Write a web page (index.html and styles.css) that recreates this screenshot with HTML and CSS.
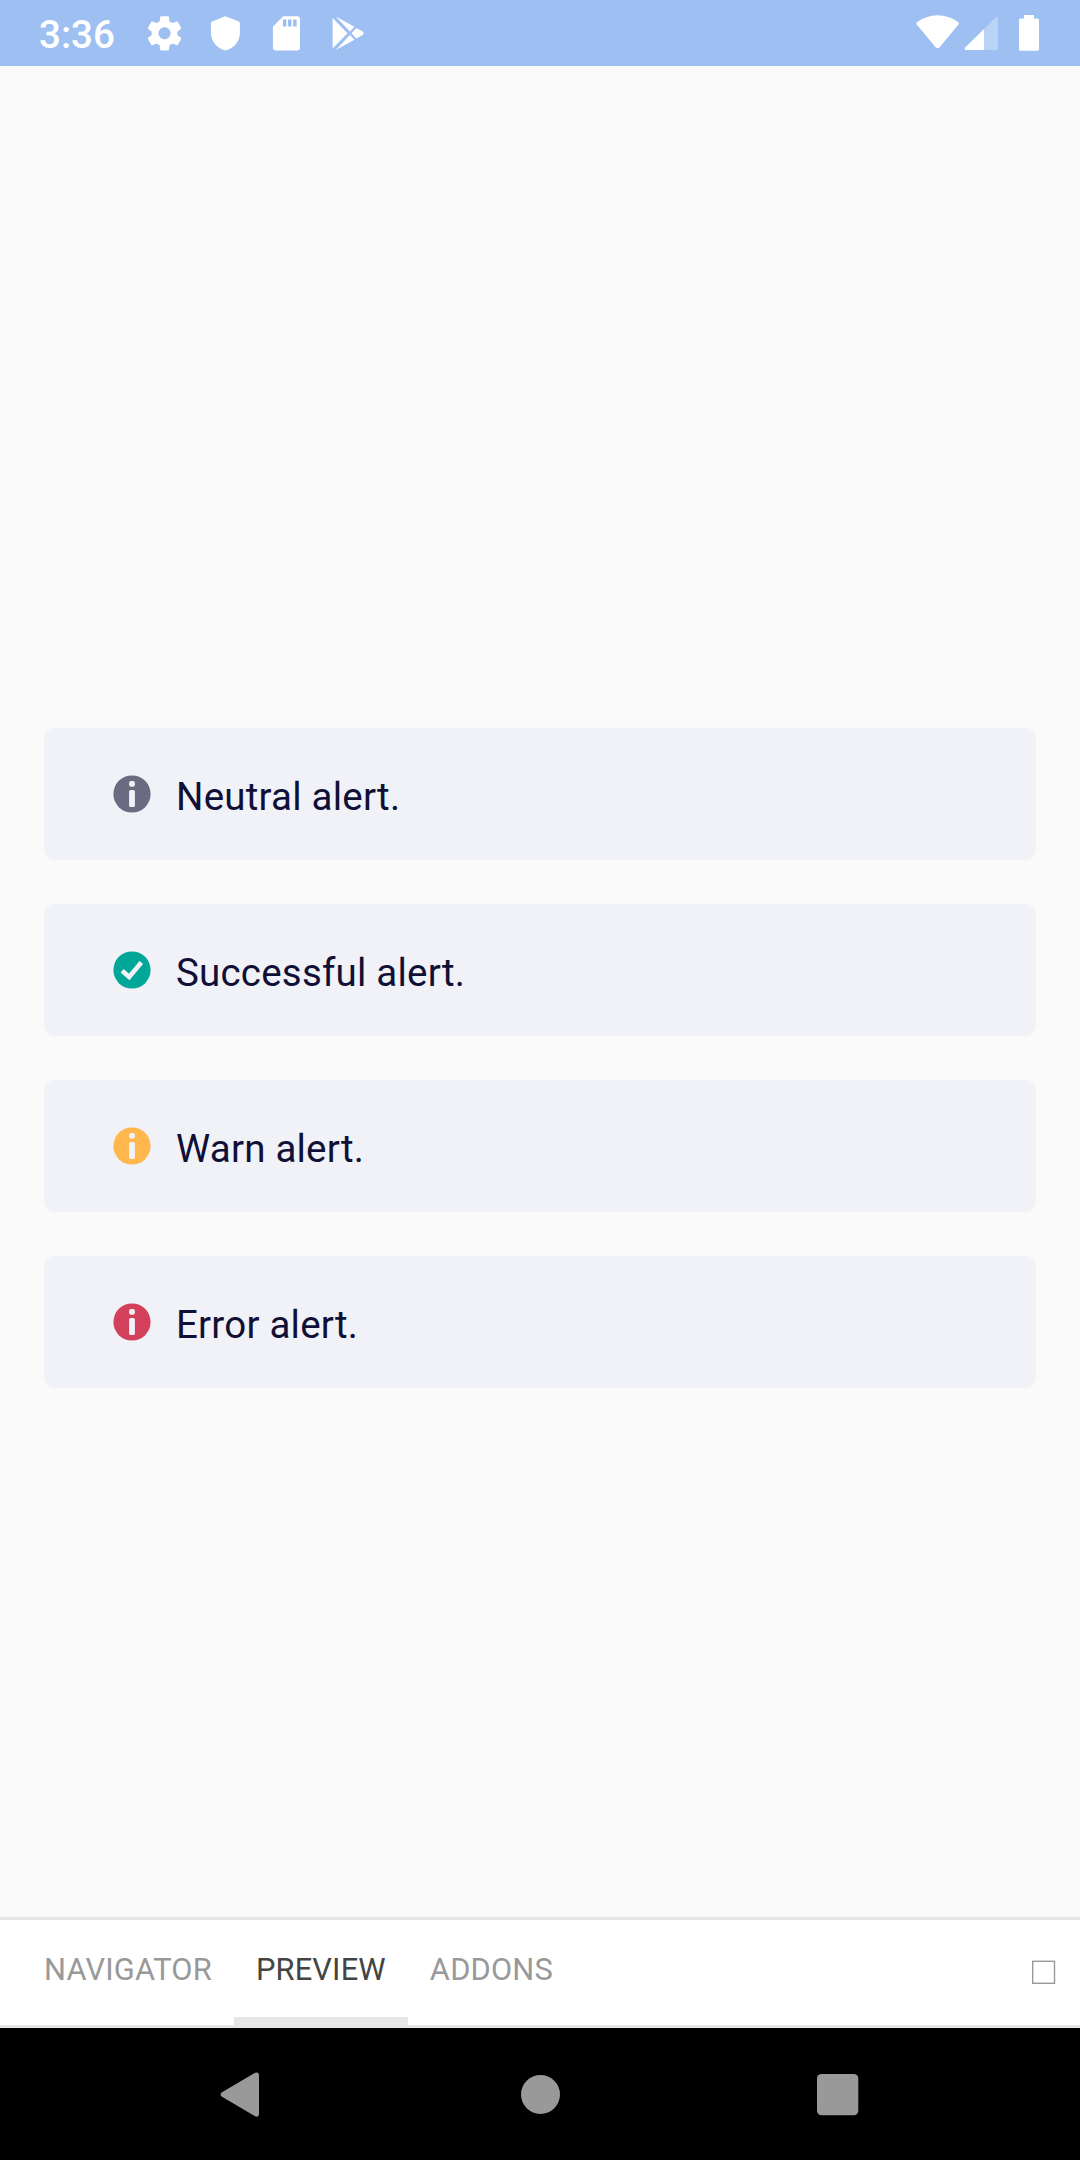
FILE: index.html
```html
<!DOCTYPE html>
<html lang="en">
<head>
<meta charset="utf-8">
<title>Alerts</title>
<link rel="stylesheet" href="styles.css">
</head>
<body>
<div class="screen">
  <header class="status">
    <span class="clock">3:36</span>
    <svg class="notifications" width="230" height="66" viewBox="140 0 230 66">
      <path transform="translate(143.9 12.7) scale(1.72)" d="M19.43 12.98c.04-.32.07-.64.07-.98s-.03-.66-.07-.98l2.11-1.65c.19-.15.24-.42.12-.64l-2-3.46c-.12-.22-.39-.3-.61-.22l-2.49 1c-.52-.4-1.08-.73-1.69-.98l-.38-2.65C14.46 2.18 14.25 2 14 2h-4c-.25 0-.46.18-.49.42l-.38 2.65c-.61.25-1.17.59-1.69.98l-2.49-1c-.23-.09-.49 0-.61.22l-2 3.46c-.13.22-.07.49.12.64l2.11 1.65c-.04.32-.07.65-.07.98s.03.66.07.98l-2.11 1.65c-.19.15-.24.42-.12.64l2 3.46c.12.22.39.3.61.22l2.49-1c.52.4 1.08.73 1.69.98l.38 2.65c.03.24.24.42.49.42h4c.25 0 .46-.18.49-.42l.38-2.65c.61-.25 1.17-.59 1.69-.98l2.49 1c.23.09.49 0 .61-.22l2-3.46c.12-.22.07-.49-.12-.64l-2.11-1.65zM12 15.5c-1.93 0-3.5-1.57-3.5-3.5s1.57-3.5 3.5-3.5 3.5 1.57 3.5 3.5-1.57 3.5-3.5 3.5z"/>
      <path d="M225.4 16.2l13.4 5.2q1.1.5 1.1 1.7v9.3c0 8.6-5.8 15.800-14.500 18.200c-8.700-2.400-14.500-9.600-14.500-18.200v-9.300q0-1.200 1.100-1.700z"/>
      <path fill-rule="evenodd" d="M283.200 16.200h13.800q3 0 3 3v28.300q0 3-3 3h-21.100q-3 0-3-3v-20.800zM282.900 19.500v7h3.500v-7zM288 19.500v7h3.500v-7zM293.100 19.500v7h3.500v-7z"/>
      <path d="M332.600 18.100l14.900 15.200-14.900 15.200zM335.800 16.500l18.700 10.300-4.600 4.800zM349.900 35.100l4.600 4.700-18.700 10.300zM356.400 28.100l6.300 3.500q2 1.700 0 3.400l-6.300 3.500-4.900-5.200z"/>
    </svg>
    <svg class="signals" width="130" height="66" viewBox="914 0 130 66">
      <path d="M916.700 24.400q-1.300-1.500.5-2.500c12.300-9 28.600-9 40.900 0q1.700 1 .4 2.500l-18.900 22.900q-2 2-4 0z"/>
      <path d="M984 28.900V50h-18q-2.200-.600-.800-2.600z"/>
      <path class="faint" d="M984 28.900l11.400-11.500q2.600-1.500 2.600 1.200V48.500q0 1.500-1.500 1.500H984z"/>
      <path d="M1024 15h10v3.600h3.500q1.500 0 1.500 1.500v29.200q0 1.500-1.500 1.500h-17q-1.500 0-1.500-1.500V20.100q0-1.500 1.500-1.500h3.500z"/>
    </svg>
  </header>

  <main class="preview">
    <div class="alert">
      <svg class="icon neutral" viewBox="0 0 38 38"><circle cx="19" cy="19" r="18.600"/><rect class="mark" x="16.100" y="6" width="5.800" height="5.800" rx="2"/><rect class="mark" x="16.100" y="15" width="5.800" height="17" rx="1.500"/></svg>
      <span>Neutral alert.</span>
    </div>
    <div class="alert">
      <svg class="icon success" viewBox="0 0 38 38"><circle cx="19" cy="19" r="18.600"/><path class="check" d="M9.200 19.800l7 6.200L28.300 11.500"/></svg>
      <span>Successful alert.</span>
    </div>
    <div class="alert">
      <svg class="icon warn" viewBox="0 0 38 38"><circle cx="19" cy="19" r="18.600"/><rect class="mark" x="16.100" y="6" width="5.800" height="5.800" rx="2"/><rect class="mark" x="16.100" y="15" width="5.800" height="17" rx="1.500"/></svg>
      <span>Warn alert.</span>
    </div>
    <div class="alert">
      <svg class="icon error" viewBox="0 0 38 38"><circle cx="19" cy="19" r="18.600"/><rect class="mark" x="16.100" y="6" width="5.800" height="5.800" rx="2"/><rect class="mark" x="16.100" y="15" width="5.800" height="17" rx="1.500"/></svg>
      <span>Error alert.</span>
    </div>
  </main>

  <nav class="tabs">
    <span class="tab">NAVIGATOR</span>
    <span class="tab active">PREVIEW</span>
    <span class="tab">ADDONS</span>
    <svg class="toggle" width="26" height="26" viewBox="0 0 26 26"><rect x="1.700" y="1.300" width="21.800" height="22"/></svg>
  </nav>

  <footer class="system">
    <svg viewBox="210 2062 64 64"><path d="M222 2092.200L255.100 2072.700Q259 2071.400 259 2075.600V2113.600Q259 2117.800 255.100 2116.300L222 2096.800Q219.200 2094.500 222 2092.200z"/></svg>
    <svg viewBox="508 2062 64 64"><circle cx="540.500" cy="2094.500" r="19.500"/></svg>
    <svg viewBox="806 2062 64 64"><rect x="817" y="2074" width="41.300" height="41.300" rx="4.500"/></svg>
  </footer>
</div>
</body>
</html>
```
FILE: styles.css
```css
body {
  margin: 0;
  font-family: Roboto, sans-serif;
}

.screen {
  width: 1080px;
  height: 2160px;
  display: flex;
  flex-direction: column;
  background: #fafafa;
  overflow: hidden;
}

.status {
  height: 66px;
  display: flex;
  align-items: center;
  background: #9dbff2;
  color: #fff;
  fill: #fff;
}

.clock {
  width: 101px;
  padding-left: 39px;
  font-size: 38.5px;
  font-weight: 500;
  line-height: 66px;
  padding-top: 3px;
}

.signals {
  margin-left: auto;
  margin-right: 36px;
}

.faint {
  opacity: 0.3;
}

.preview {
  flex: 1;
  display: flex;
  flex-direction: column;
  gap: 44px;
  padding: 662px 44px 0;
}

.alert {
  box-sizing: border-box;
  height: 132px;
  display: flex;
  align-items: center;
  gap: 25px;
  padding-left: 69px;
  border-radius: 11px;
  background: #f1f2f7;
  color: #101036;
  font-size: 38.5px;
  letter-spacing: 0.21px;
  line-height: 50px;
}

.alert span {
  padding-top: 5px;
}

.icon {
  width: 38px;
  height: 38px;
}

.mark {
  fill: #f1f2f7;
}

.check {
  fill: none;
  stroke: #f1f2f7;
  stroke-width: 4.6;
}

.neutral { fill: #6a6a80; }
.success { fill: #00a798; }
.warn { fill: #ffb74e; }
.error { fill: #d3405b; }

.tabs {
  box-sizing: border-box;
  height: 111px;
  display: flex;
  padding: 0 22px;
  border-top: 3px solid #e6e6e6;
  border-bottom: 3px solid #e6e6e6;
  background: #fff;
}

.tab {
  box-sizing: border-box;
  padding: 0 22px;
  border-bottom: 8px solid transparent;
  color: #999;
  font-size: 30.8px;
  letter-spacing: 0.18px;
  line-height: 99px;
}

.tab.active {
  border-color: #e6e6e6;
  color: #444;
}

.toggle {
  margin: 40px 1px 0 auto;
  fill: none;
  stroke: #999;
  stroke-width: 1.4;
}

.system {
  height: 132px;
  display: flex;
  justify-content: center;
  align-items: center;
  gap: 234px;
  background: #000;
  fill: #999;
}

.system svg {
  width: 64px;
  height: 64px;
}
```
